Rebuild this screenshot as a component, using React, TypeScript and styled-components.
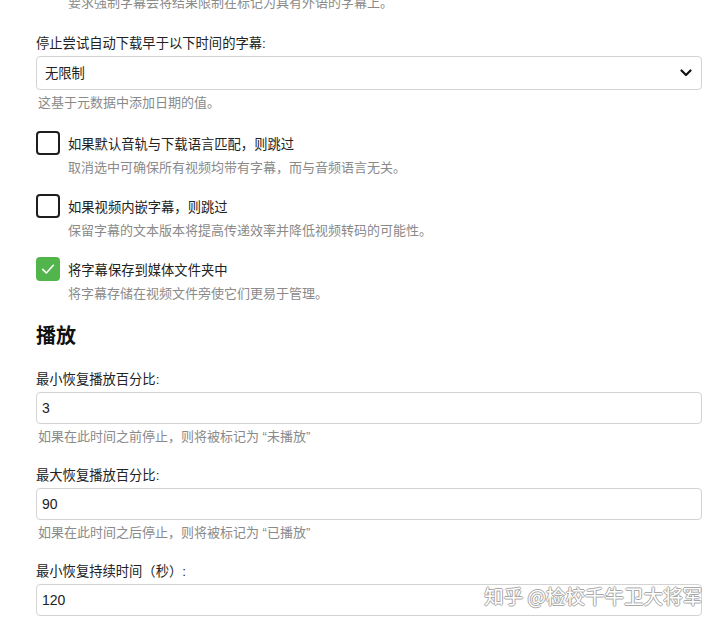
import styled, { createGlobalStyle } from 'styled-components';

const GlobalStyle = createGlobalStyle`
  html, body {
    margin: 0;
    padding: 0;
    background: #ffffff;
    overflow: hidden;
  }

  body {
    font-family: 'Liberation Sans', 'Noto Sans CJK SC', sans-serif;
    color: #222222;
  }
`;

const Page = styled.div`
  position: relative;
  width: 720px;
  height: 622px;
  overflow: hidden;
  box-sizing: border-box;
  padding: 0 18px 0 36px;
`;

const Content = styled.div`
  display: flex;
  flex-direction: column;
  margin-top: -6px;
`;

const Description = styled.div<{ $indent?: boolean }>`
  margin-top: 4px;
  padding-left: ${({ $indent }) => ($indent ? '32px' : '2px')};
  font-size: 13px;
  line-height: 18px;
  color: #8a8a8a;
  white-space: nowrap;
`;

const TopNote = styled(Description)`
  margin-top: 0;
`;

const Field = styled.div<{ $gap: number }>`
  display: flex;
  flex-direction: column;
  margin-top: ${({ $gap }) => $gap}px;
`;

const Label = styled.label`
  display: block;
  margin-bottom: 3px;
  font-size: 13.3px;
  line-height: 18px;
  color: #222222;
`;

const SelectWrap = styled.div`
  position: relative;
`;

const Select = styled.select`
  display: block;
  width: 100%;
  height: 34px;
  box-sizing: border-box;
  padding: 0 30px 0 8px;
  border: 1px solid #d3d3d3;
  border-radius: 4px;
  background: #ffffff;
  font-family: 'Liberation Sans', 'Noto Sans CJK SC', sans-serif;
  font-size: 13.3px;
  color: #222222;
  appearance: none;
  outline: none;
`;

const Chevron = styled.svg`
  position: absolute;
  top: 12px;
  right: 10px;
  width: 12px;
  height: 10px;
  pointer-events: none;
`;

const TextInput = styled.input`
  display: block;
  width: 100%;
  height: 32px;
  box-sizing: border-box;
  padding: 0 5px;
  border: 1px solid #d3d3d3;
  border-radius: 4px;
  background: #ffffff;
  font-family: 'Liberation Sans', 'Noto Sans CJK SC', sans-serif;
  font-size: 14px;
  color: #222222;
  outline: none;
`;

const CheckRow = styled.div<{ $gap: number }>`
  display: flex;
  flex-direction: column;
  margin-top: ${({ $gap }) => $gap}px;
`;

const CheckLine = styled.label`
  display: flex;
  align-items: center;
  gap: 8px;
  height: 24px;
  font-size: 13.3px;
  color: #222222;
`;

const Box = styled.span<{ $checked: boolean }>`
  display: flex;
  align-items: center;
  justify-content: center;
  width: 24px;
  height: 24px;
  box-sizing: border-box;
  border-radius: 4px;
  border: ${({ $checked }) => ($checked ? 'none' : '2px solid #1e1e1e')};
  background: ${({ $checked }) => ($checked ? '#52b54b' : '#ffffff')};
`;

const Heading = styled.h2`
  margin: 19px 0 0;
  font-size: 20px;
  line-height: 28px;
  font-weight: 700;
  color: #111111;
`;

const Watermark = styled.div`
  position: absolute;
  right: 18px;
  bottom: 14px;
  font-family: 'Noto Sans CJK SC', sans-serif;
  font-size: 19.5px;
  line-height: 24px;
  color: #ffffff;
  text-shadow:
    -1px 0 #a8a8a8,
    1px 0 #a8a8a8,
    0 -1px #a8a8a8,
    0 1px #a8a8a8;
`;

type CheckProps = { label: string; note: string; checked?: boolean; gap: number };

function Check ({ label, note, checked = false, gap }: CheckProps) {
  return (
    <CheckRow $gap={gap}>
      <CheckLine>
        <Box $checked={checked}>
          {checked && (
            <svg width='16' height='16' viewBox='0 0 24 24' fill='none' stroke='#ffffff' strokeWidth='2.4' strokeLinecap='round' strokeLinejoin='round'>
              <polyline points='4 12.5 9.5 18 20 6.5' />
            </svg>
          )}
        </Box>
        {label}
      </CheckLine>
      <Description $indent>{note}</Description>
    </CheckRow>
  );
}

type InputProps = { label: string; value: string; note: string; gap: number };

function NumberField ({ label, value, note, gap }: InputProps) {
  return (
    <Field $gap={gap}>
      <Label>{label}</Label>
      <TextInput defaultValue={value} />
      <Description>{note}</Description>
    </Field>
  );
}

export default function App () {
  return (
    <Page>
      <GlobalStyle />
      <Content>
        <TopNote $indent>要求强制字幕会将结果限制在标记为具有外语的字幕上。</TopNote>

        <Field $gap={23}>
          <Label>停止尝试自动下载早于以下时间的字幕:</Label>
          <SelectWrap>
            <Select defaultValue='0'>
              <option value='0'>无限制</option>
            </Select>
            <Chevron viewBox='0 0 12 10'>
              <polyline points='1.5 2.5 6 7 10.5 2.5' fill='none' stroke='#111111' strokeWidth='2.2' strokeLinecap='round' strokeLinejoin='round' />
            </Chevron>
          </SelectWrap>
          <Description>这基于元数据中添加日期的值。</Description>
        </Field>

        <Check gap={19} label='如果默认音轨与下载语言匹配，则跳过' note='取消选中可确保所有视频均带有字幕，而与音频语言无关。' />
        <Check gap={17} label='如果视频内嵌字幕，则跳过' note='保留字幕的文本版本将提高传递效率并降低视频转码的可能性。' />
        <Check gap={17} checked label='将字幕保存到媒体文件夹中' note='将字幕存储在视频文件旁使它们更易于管理。' />

        <Heading>播放</Heading>

        <NumberField gap={21} label='最小恢复播放百分比:' value='3' note='如果在此时间之前停止，则将被标记为 “未播放”' />
        <NumberField gap={21} label='最大恢复播放百分比:' value='90' note='如果在此时间之后停止，则将被标记为 “已播放”' />
        <NumberField gap={21} label='最小恢复持续时间（秒）:' value='120' note='短于此时间的视频将不会被记住播放位置' />
      </Content>
      <Watermark>知乎 @检校千牛卫大将军</Watermark>
    </Page>
  );
}
